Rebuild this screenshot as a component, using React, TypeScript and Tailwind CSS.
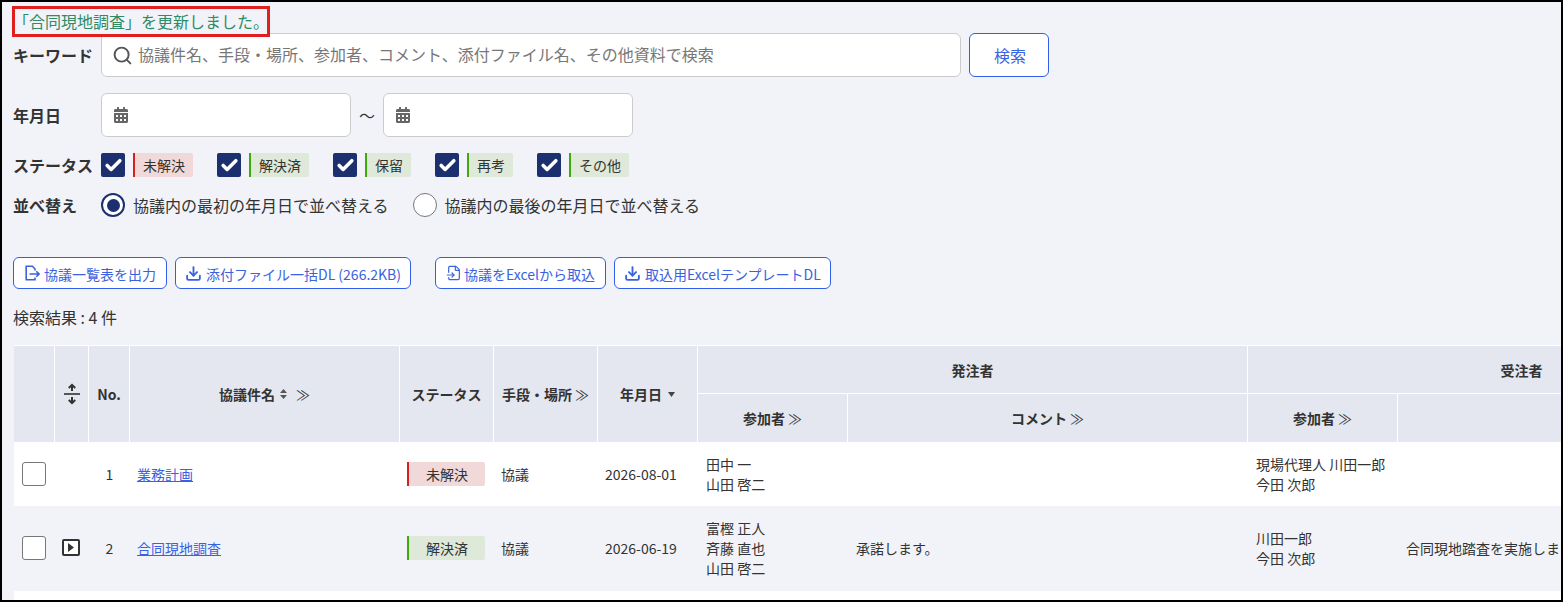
import { Check, Download, FileInput, Search } from 'lucide-react';
import { FaCalendarAlt } from 'react-icons/fa';

const statuses = [
  { label: '未解決', red: true, w: 'w-[60px]', next: 'mr-6' },
  { label: '解決済', red: false, w: 'w-[60px]', next: 'mr-6' },
  { label: '保留', red: false, w: 'w-[46px]', next: 'mr-6' },
  { label: '再考', red: false, w: 'w-[46px]', next: 'mr-6' },
  { label: 'その他', red: false, w: 'w-[60px]', next: '' },
];

function Chip({ label, red, className }: { label: string; red: boolean; className: string }) {
  return (
    <span
      className={`flex h-6 items-center justify-center rounded-r-[2px] border-l-2 text-sm ${className} ${
        red ? 'border-[#d9201f] bg-[#f2d9d9]' : 'border-[#3fa80a] bg-[#dfe9d9]'
      }`}
    >
      {label}
    </span>
  );
}

function Label({ children }: { children: string }) {
  return <div className="w-[88px] shrink-0 font-bold">{children}</div>;
}

function DateInput() {
  return (
    <div className="flex h-11 w-[250px] items-center rounded-md border border-[#cccccc] bg-white pl-[11px]">
      <FaCalendarAlt className="text-[#666666]" size={16} />
    </div>
  );
}

function Radio({ on, label }: { on?: boolean; label: string }) {
  return (
    <label className="flex items-center gap-2">
      <span className={`flex h-6 w-6 items-center justify-center rounded-full border bg-white ${on ? 'border-2 border-[#1c3070]' : 'border-[#777777]'}`}>
        {on && <span className="h-[13px] w-[13px] rounded-full bg-[#1c3070]" />}
      </span>
      <span className="pt-px leading-[23px]">{label}</span>
    </label>
  );
}

function OutlineButton({ icon, label, className = '' }: { icon: React.ReactNode; label: string; className?: string }) {
  return (
    <button className={`flex h-8 items-center rounded-md border border-[#2f5fe8] bg-white text-sm text-[#3a62e0] ${className}`}>
      {icon}
      <span className="pt-px">{label}</span>
    </button>
  );
}

function ExportIcon() {
  return (
    <svg width="16" height="16" viewBox="0 0 16 16" fill="none" stroke="currentColor" strokeWidth="1.6" className="mr-[4px]">
      <path d="M11 5.5V4L8.5 1.2H2.2v13.6H11v-2.3" />
      <path d="M5.5 9h9.5M12.3 6.3 15 9l-2.7 2.7" />
    </svg>
  );
}

function More() {
  return <span className="ml-[3px] font-normal">≫</span>;
}

function Box() {
  return <span className="block h-6 w-6 rounded-[3px] border border-[#777777] bg-white" />;
}

const th = 'border-r border-t border-white bg-[#e4e7f0] px-1 text-center text-sm font-bold';

export default function App() {
  return (
    <div className="h-[602px] w-[1563px] overflow-hidden border-2 border-black bg-[#f2f3f8] pl-[11px] text-base text-[#333333] font-['Noto_Sans_CJK_JP','Noto_Sans',sans-serif]">
      {/* flash message, with the red marking round it */}
      <div className="relative z-10 h-[31px]">
        <div className="absolute -left-[1px] top-1 h-[31px] w-[258px] whitespace-nowrap border-[3px] border-[#e0201f] bg-[#f2f3f8] leading-[25px] text-[#2e8b66]">
          <span className="-ml-[2px]">「合同現地調査」を更新しました。</span>
        </div>
      </div>

      <div className="flex items-center">
        <Label>キーワード</Label>
        <div className="flex h-11 w-[860px] items-center gap-[5px] rounded-md border border-[#cccccc] bg-white pb-[3px] pl-[10px] text-[#777777]">
          <Search size={21} strokeWidth={2.2} className="mt-[3px] text-[#555555]" />
          協議件名、手段・場所、参加者、コメント、添付ファイル名、その他資料で検索
        </div>
        <button className="ml-2 h-11 w-20 rounded-md border border-[#2f5fe8] bg-white pl-0.5 text-[#3a62e0]">検索</button>
      </div>

      <div className="mt-4 flex items-center">
        <Label>年月日</Label>
        <DateInput />
        <span className="w-8 text-center">～</span>
        <DateInput />
      </div>

      <div className="mt-4 flex items-center">
        <Label>ステータス</Label>
        {statuses.map((s) => (
          <div key={s.label} className={`flex items-center gap-2 ${s.next}`}>
            <span className="flex h-6 w-6 items-center justify-center rounded-[2px] bg-[#1c3070]">
              <Check size={19} strokeWidth={4.5} className="text-white" />
            </span>
            <Chip label={s.label} red={s.red} className={s.w} />
          </div>
        ))}
      </div>

      <div className="mt-4 flex items-center">
        <Label>並べ替え</Label>
        <div className="flex gap-6">
          <Radio on label="協議内の最初の年月日で並べ替える" />
          <Radio label="協議内の最後の年月日で並べ替える" />
        </div>
      </div>

      <div className="mt-10 flex">
        <OutlineButton className="w-[154px] pl-[10px]" icon={<ExportIcon />} label="協議一覧表を出力" />
        <OutlineButton className="ml-2 w-[236px] pl-[9px]" icon={<Download size={17} strokeWidth={2.6} className="mr-[4px]" />} label="添付ファイル一括DL (266.2KB)" />
        <OutlineButton className="ml-6 w-[171px] pl-[10px]" icon={<FileInput size={16} strokeWidth={1.8} className="mr-[2px]" />} label="協議をExcelから取込" />
        <OutlineButton className="ml-2 w-[217px] pl-[9px]" icon={<Download size={17} strokeWidth={2.6} className="mr-[4px]" />} label="取込用ExcelテンプレートDL" />
      </div>

      <div className="mt-4">検索結果 : 4 件</div>

      <table className="ml-px mt-4 w-[1782px] table-fixed border-separate border-spacing-0 text-sm">
        <colgroup>
          <col className="w-[41px]" />
          <col className="w-[34px]" />
          <col className="w-[41px]" />
          <col className="w-[270px]" />
          <col className="w-[94px]" />
          <col className="w-[104px]" />
          <col className="w-[100px]" />
          <col className="w-[150px]" />
          <col className="w-[400px]" />
          <col className="w-[150px]" />
          <col className="w-[398px]" />
        </colgroup>
        <thead>
          <tr className="h-[49px]">
            <th rowSpan={2} className={th} />
            <th rowSpan={2} className={th}>
              <svg width="18" height="22" viewBox="0 0 18 22" fill="none" stroke="#333333" className="mx-auto">
                <path d="M1 11h16" strokeWidth="1.6" />
                <path d="M9 8V2M5.8 5 9 1.8 12.2 5M9 14v6M5.8 17l3.2 3.2 3.2-3.2" strokeWidth="2" />
              </svg>
            </th>
            <th rowSpan={2} className={th}>No.</th>
            <th rowSpan={2} className={th}>
              <span className="inline-flex items-center">
                協議件名
                <svg width="7" height="10" viewBox="0 0 7 10" fill="#555555" className="ml-[5px]">
                  <path d="M3.5 0 7 4H0zM3.5 10 0 6h7z" />
                </svg>
                <span className="ml-[9px] font-normal">≫</span>
              </span>
            </th>
            <th rowSpan={2} className={th}>ステータス</th>
            <th rowSpan={2} className={th}>手段・場所<More /></th>
            <th rowSpan={2} className={th}>
              <span className="inline-flex items-center">
                年月日
                <svg width="7" height="5" viewBox="0 0 7 5" fill="#444444" className="ml-[6px]">
                  <path d="M0 0h7L3.5 5z" />
                </svg>
              </span>
            </th>
            <th colSpan={2} className={`${th} border-b`}>発注者</th>
            <th colSpan={2} className={`${th} border-b`}>受注者</th>
          </tr>
          <tr className="h-[48px]">
            <th className="border-r border-white bg-[#e4e7f0] text-center text-sm font-bold">参加者<More /></th>
            <th className="border-r border-white bg-[#e4e7f0] text-center text-sm font-bold">コメント<More /></th>
            <th className="border-r border-white bg-[#e4e7f0] text-center text-sm font-bold">参加者<More /></th>
            <th className="border-r border-white bg-[#e4e7f0] text-center text-sm font-bold" />
          </tr>
        </thead>
        <tbody className="leading-5">
          <tr className="h-[64px] bg-white">
            <td className="pl-2"><Box /></td>
            <td />
            <td className="text-center">1</td>
            <td className="pl-[7px]"><a className="text-[#3a62e0] underline">業務計画</a></td>
            <td className="pl-[7px]"><Chip label="未解決" red className="w-[78px]" /></td>
            <td className="pl-[7px]">協議</td>
            <td className="pl-[7px]">2026-08-01</td>
            <td className="px-2">田中 一<br />山田 啓二</td>
            <td className="px-2" />
            <td className="px-2">現場代理人 川田一郎<br />今田 次郎</td>
            <td className="px-2" />
          </tr>
          <tr className="h-[85px] [&>td]:pb-[2px]">
            <td className="pl-2"><Box /></td>
            <td className="pl-[7px]">
              <span className="flex h-[17px] w-[18px] items-center justify-center rounded-[2px] border-2 border-[#333333] bg-white">
                <svg width="6" height="9" viewBox="0 0 6 9" fill="#333333"><path d="M0 0l6 4.5L0 9z" /></svg>
              </span>
            </td>
            <td className="text-center">2</td>
            <td className="pl-[7px]"><a className="text-[#3a62e0] underline">合同現地調査</a></td>
            <td className="pl-[7px]"><Chip label="解決済" red={false} className="w-[78px]" /></td>
            <td className="pl-[7px]">協議</td>
            <td className="pl-[7px]">2026-06-19</td>
            <td className="px-2">富樫 正人<br />斉藤 直也<br />山田 啓二</td>
            <td className="px-2">承諾します。</td>
            <td className="px-2">川田一郎<br />今田 次郎</td>
            <td className="whitespace-nowrap px-2">合同現地踏査を実施します。</td>
          </tr>
          <tr className="h-[40px] bg-white">
            <td colSpan={11} />
          </tr>
        </tbody>
      </table>
    </div>
  );
}
